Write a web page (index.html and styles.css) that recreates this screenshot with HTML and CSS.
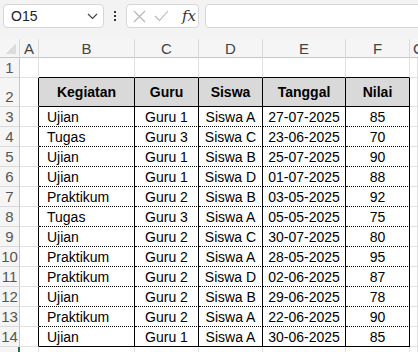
FILE: index.html
```html
<!DOCTYPE html>
<html lang="id">
<head>
    <meta charset="UTF-8">
    <meta name="viewport" content="width=device-width, initial-scale=1.0">
    <title>Nilai Kegiatan</title>
    <link rel="stylesheet" href="styles.css">
</head>
<body>

    <div class="toolbar">
        <div class="namebox">
            <span>O15</span>
            <svg class="chev" width="11" height="7" viewBox="0 0 11 7"><path d="M1 1l4.5 4.5L10 1" fill="none" stroke="#444" stroke-width="1.2"/></svg>
        </div>
        <div class="dots"><i></i><i></i><i></i></div>
        <div class="fxbox">
            <svg width="13" height="13" viewBox="0 0 13 13"><path d="M1 1l11 11M12 1L1 12" stroke="#b5b5b5" stroke-width="1.1"/></svg>
            <svg width="15" height="12" viewBox="0 0 15 12"><path d="M1 6l4.5 4.5L14 1" fill="none" stroke="#b5b5b5" stroke-width="1.1"/></svg>
            <span class="fx">fx</span>
        </div>
        <div class="formula"></div>
    </div>

    <div class="sheet">
        <!-- kepala kolom -->
        <div class="corner"></div>
        <div class="colh">A</div>
        <div class="colh">B</div>
        <div class="colh">C</div>
        <div class="colh">D</div>
        <div class="colh">E</div>
        <div class="colh">F</div>
        <div class="colh g">G</div>

        <!-- baris 1 -->
        <div class="rowh">1</div>
        <div class="c"></div>
        <div class="c top"></div><div class="c top"></div><div class="c top"></div><div class="c top"></div><div class="c top"></div>
        <div class="c"></div>

        <!-- baris 2 -->
        <div class="rowh">2</div>
        <div class="c edge"></div>
        <div class="th">Kegiatan</div><div class="th">Guru</div><div class="th">Siswa</div><div class="th">Tanggal</div><div class="th">Nilai</div>
        <div class="c"></div>

        <div class="rowh">3</div><div class="c edge"></div>
        <div class="td l">Ujian</div><div class="td">Guru 1</div><div class="td">Siswa A</div><div class="td">27-07-2025</div><div class="td">85</div>
        <div class="c"></div>

        <div class="rowh">4</div><div class="c edge"></div>
        <div class="td l">Tugas</div><div class="td">Guru 3</div><div class="td">Siswa C</div><div class="td">23-06-2025</div><div class="td">70</div>
        <div class="c"></div>

        <div class="rowh">5</div><div class="c edge"></div>
        <div class="td l">Ujian</div><div class="td">Guru 1</div><div class="td">Siswa B</div><div class="td">25-07-2025</div><div class="td">90</div>
        <div class="c"></div>

        <div class="rowh">6</div><div class="c edge"></div>
        <div class="td l">Ujian</div><div class="td">Guru 1</div><div class="td">Siswa D</div><div class="td">01-07-2025</div><div class="td">88</div>
        <div class="c"></div>

        <div class="rowh">7</div><div class="c edge"></div>
        <div class="td l">Praktikum</div><div class="td">Guru 2</div><div class="td">Siswa B</div><div class="td">03-05-2025</div><div class="td">92</div>
        <div class="c"></div>

        <div class="rowh">8</div><div class="c edge"></div>
        <div class="td l">Tugas</div><div class="td">Guru 3</div><div class="td">Siswa A</div><div class="td">05-05-2025</div><div class="td">75</div>
        <div class="c"></div>

        <div class="rowh">9</div><div class="c edge"></div>
        <div class="td l">Ujian</div><div class="td">Guru 2</div><div class="td">Siswa C</div><div class="td">30-07-2025</div><div class="td">80</div>
        <div class="c"></div>

        <div class="rowh">10</div><div class="c edge"></div>
        <div class="td l">Praktikum</div><div class="td">Guru 2</div><div class="td">Siswa A</div><div class="td">28-05-2025</div><div class="td">95</div>
        <div class="c"></div>

        <div class="rowh">11</div><div class="c edge"></div>
        <div class="td l">Praktikum</div><div class="td">Guru 2</div><div class="td">Siswa D</div><div class="td">02-06-2025</div><div class="td">87</div>
        <div class="c"></div>

        <div class="rowh">12</div><div class="c edge"></div>
        <div class="td l">Ujian</div><div class="td">Guru 2</div><div class="td">Siswa B</div><div class="td">29-06-2025</div><div class="td">78</div>
        <div class="c"></div>

        <div class="rowh">13</div><div class="c edge"></div>
        <div class="td l">Praktikum</div><div class="td">Guru 2</div><div class="td">Siswa A</div><div class="td">22-06-2025</div><div class="td">90</div>
        <div class="c"></div>

        <div class="rowh">14</div><div class="c edge"></div>
        <div class="td l last">Ujian</div><div class="td last">Guru 1</div><div class="td last">Siswa A</div><div class="td last">30-06-2025</div><div class="td last">85</div>
        <div class="c"></div>

        <!-- baris 15 terpotong di tepi bawah -->
        <div class="rowh sel"></div>
        <div class="c"></div><div class="c"></div><div class="c"></div><div class="c"></div><div class="c"></div><div class="c"></div><div class="c"></div>
    </div>

</body>
</html>
```

FILE: styles.css
```css
body {
    margin: 0;
    width: 418px;
    height: 352px;
    overflow: hidden;
    background-color: #fff;
    font-family: "Liberation Sans", Arial, sans-serif;
    font-size: 14px;
    color: #000;
}

/* bar atas */
.toolbar {
    display: flex;
    align-items: center;
    gap: 6px;
    height: 39px;
    padding: 0 0 7px 3px;
    background-color: #f3f3f3;
    box-sizing: border-box;
}

.namebox,
.fxbox,
.formula {
    height: 24px;
    box-sizing: border-box;
    background-color: #fff;
    border: 1px solid #d6d6d6;
    border-radius: 4px;
}

.namebox {
    width: 101px;
    display: flex;
    align-items: center;
    justify-content: space-between;
    padding: 0 5px 0 7px;
    font-size: 14px;
    color: #222;
}

.dots {
    width: 10px;
    display: flex;
    flex-direction: column;
    align-items: center;
    gap: 2px;
}

.dots i {
    width: 2px;
    height: 2px;
    background-color: #333;
}

.fxbox {
    width: 73px;
    display: flex;
    align-items: center;
    gap: 8px;
    padding-left: 6px;
}

.fx {
    font-family: "DejaVu Serif", "Liberation Serif", serif;
    font-style: italic;
    font-size: 15px;
    color: #333;
    margin-left: 5px;
}

.formula {
    flex: 1;
    margin-right: -6px;
}

/* lembar kerja */
.sheet {
    display: grid;
    grid-template-columns: 20px 19px 96px 64px 64px 83px 64px 1fr;
    grid-template-rows: 19px 20px 29px repeat(13, 20px);
}

.sheet > div {
    box-sizing: border-box;
    border-right: 1px solid #e1e1e1;
    border-bottom: 1px solid #e1e1e1;
    display: flex;
    align-items: center;
    justify-content: center;
    white-space: nowrap;
    overflow: hidden;
}

.sheet > .corner {
    background: linear-gradient(135deg, #f5f5f5 58%, #dcdcdc 58%) no-repeat right 3px bottom 3px / 13px 13px, #f5f5f5;
}

.sheet > .corner,
.sheet > .colh {
    background-color: #f5f5f5;
    border-bottom-color: #c6c6c6;
    border-right-color: #dadada;
    color: #444;
    font-size: 15px;
}

.sheet > .colh.g {
    justify-content: flex-start;
    padding-left: 3px;
    border-right: 0;
}

.sheet > .rowh {
    background-color: #f5f5f5;
    border-right-color: #c6c6c6;
    border-bottom-color: #dadada;
    color: #555;
    font-size: 15px;
    align-items: flex-end;
    padding-bottom: 1px;
}

.sheet > .rowh.sel {
    border-right: 2px solid #1e7145;
}

.sheet > .top {
    border-bottom-color: #000;
}

.sheet > .edge {
    border-right-color: #000;
}

.sheet > .th {
    background-color: #d9d9d9;
    font-weight: bold;
    border-right-color: #000;
    border-bottom-color: #000;
}

.sheet > .td {
    border-right-color: #000;
    border-bottom: 1px dotted #000;
    align-items: flex-end;
    padding-bottom: 1px;
}

.sheet > .td.last {
    border-bottom: 1px solid #000;
}

.sheet > .l {
    justify-content: flex-start;
    padding-left: 8px;
}
```
